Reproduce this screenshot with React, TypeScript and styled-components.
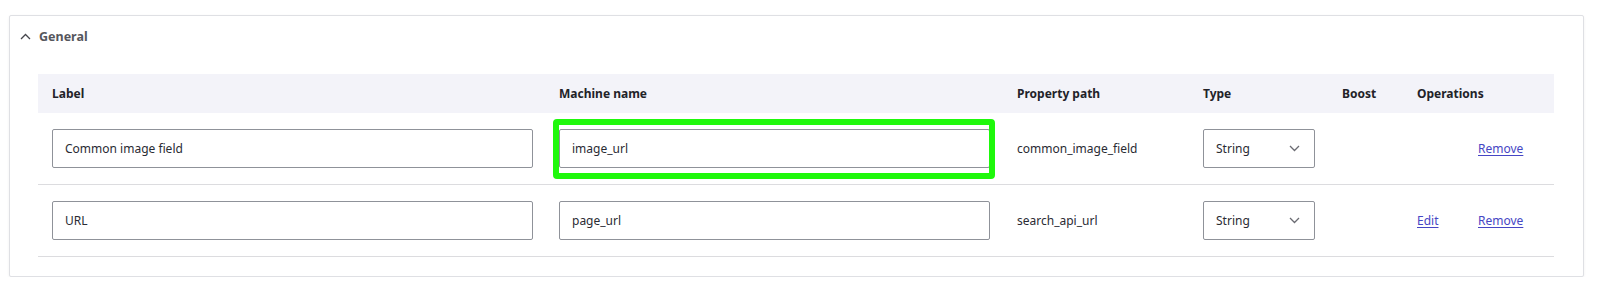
import styled, { createGlobalStyle } from 'styled-components';

const GlobalStyle = createGlobalStyle`
  html, body {
    margin: 0;
    padding: 0;
    background: #ffffff;
  }
  body {
    font-family: "Noto Sans", "Liberation Sans", sans-serif;
    font-size: 12px;
    color: #2a2b33;
  }
`;

const Card = styled.section`
  margin: 15px 16px 0 9px;
  border: 1px solid #dfe0e4;
  border-radius: 2px;
  box-shadow: 0 1px 3px rgba(0, 0, 0, 0.06);
  padding: 0 29px 19px 28px;
  background: #fff;
`;

const Summary = styled.div`
  display: flex;
  align-items: center;
  gap: 8px;
  height: 40px;
  margin-left: -18px;
  margin-bottom: 18px;
  font-weight: 700;
  font-size: 12.5px;
  color: #55565c;
`;

const GRID = '507px 458px 186px 139px 75px 61px 1fr';

const Row = styled.div<{ head?: boolean }>`
  display: grid;
  grid-template-columns: ${GRID};
  align-items: center;
  background: ${({ head }) => (head ? '#f3f3f9' : 'transparent')};
  height: ${({ head }) => (head ? '39px' : 'auto')};
  padding: ${({ head }) => (head ? '0' : '16px 0 16px')};
  border-bottom: ${({ head }) => (head ? 'none' : '1px solid #dcdcdf')};
`;

const Cell = styled.div<{ span?: number }>`
  padding-left: 14px;
  grid-column: ${({ span }) => (span ? `span ${span}` : 'auto')};
  white-space: nowrap;
`;

const HeadCell = styled(Cell)`
  font-weight: 700;
  color: #222228;
`;

const TextInput = styled.div<{ width: number }>`
  box-sizing: border-box;
  width: ${({ width }) => width}px;
  height: 39px;
  border: 1px solid #8f9299;
  border-radius: 2px;
  display: flex;
  align-items: center;
  padding: 0 12px;
  color: #2a2b33;
  background: #fff;
`;

const Highlight = styled.div`
  position: relative;
  width: 431px;
`;

const HighlightFrame = styled.div`
  position: absolute;
  left: -6px;
  right: -5px;
  top: -10px;
  bottom: -11px;
  border: 6px solid #1ff80c;
  border-radius: 4px;
  pointer-events: none;
`;

const Select = styled(TextInput)`
  justify-content: space-between;
  padding-right: 14px;
`;

const Link = styled.a`
  color: #4646c4;
  text-decoration: underline;
  text-underline-offset: 2px;
  cursor: pointer;
`;

const Chevron = ({ up }: { up?: boolean }) => (
  <svg width="11" height="7" viewBox="0 0 11 7" fill="none">
    <path
      d={up ? 'M1 6L5.5 1.5L10 6' : 'M1 1L5.5 5.5L10 1'}
      stroke={up ? '#45464c' : '#6a6b72'}
      strokeWidth="1.3"
    />
  </svg>
);

type Field = {
  label: string;
  machine: string;
  path: string;
  type: string;
  editable: boolean;
  highlighted?: boolean;
};

const fields: Field[] = [
  { label: 'Common image field', machine: 'image_url', path: 'common_image_field', type: 'String', editable: false, highlighted: true },
  { label: 'URL', machine: 'page_url', path: 'search_api_url', type: 'String', editable: true },
];

export default function App() {
  return (
    <>
      <GlobalStyle />
      <Card>
        <Summary>
          <Chevron up />
          General
        </Summary>
        <Row head>
          <HeadCell>Label</HeadCell>
          <HeadCell>Machine name</HeadCell>
          <HeadCell>Property path</HeadCell>
          <HeadCell>Type</HeadCell>
          <HeadCell>Boost</HeadCell>
          <HeadCell span={2}>Operations</HeadCell>
        </Row>
        {fields.map((f) => (
          <Row key={f.machine}>
            <Cell>
              <TextInput width={481}>{f.label}</TextInput>
            </Cell>
            <Cell>
              {f.highlighted ? (
                <Highlight>
                  <TextInput width={431}>{f.machine}</TextInput>
                  <HighlightFrame />
                </Highlight>
              ) : (
                <TextInput width={431}>{f.machine}</TextInput>
              )}
            </Cell>
            <Cell>{f.path}</Cell>
            <Cell>
              <Select width={112}>
                {f.type}
                <Chevron />
              </Select>
            </Cell>
            <Cell />
            <Cell>{f.editable && <Link>Edit</Link>}</Cell>
            <Cell>
              <Link>Remove</Link>
            </Cell>
          </Row>
        ))}
      </Card>
    </>
  );
}
